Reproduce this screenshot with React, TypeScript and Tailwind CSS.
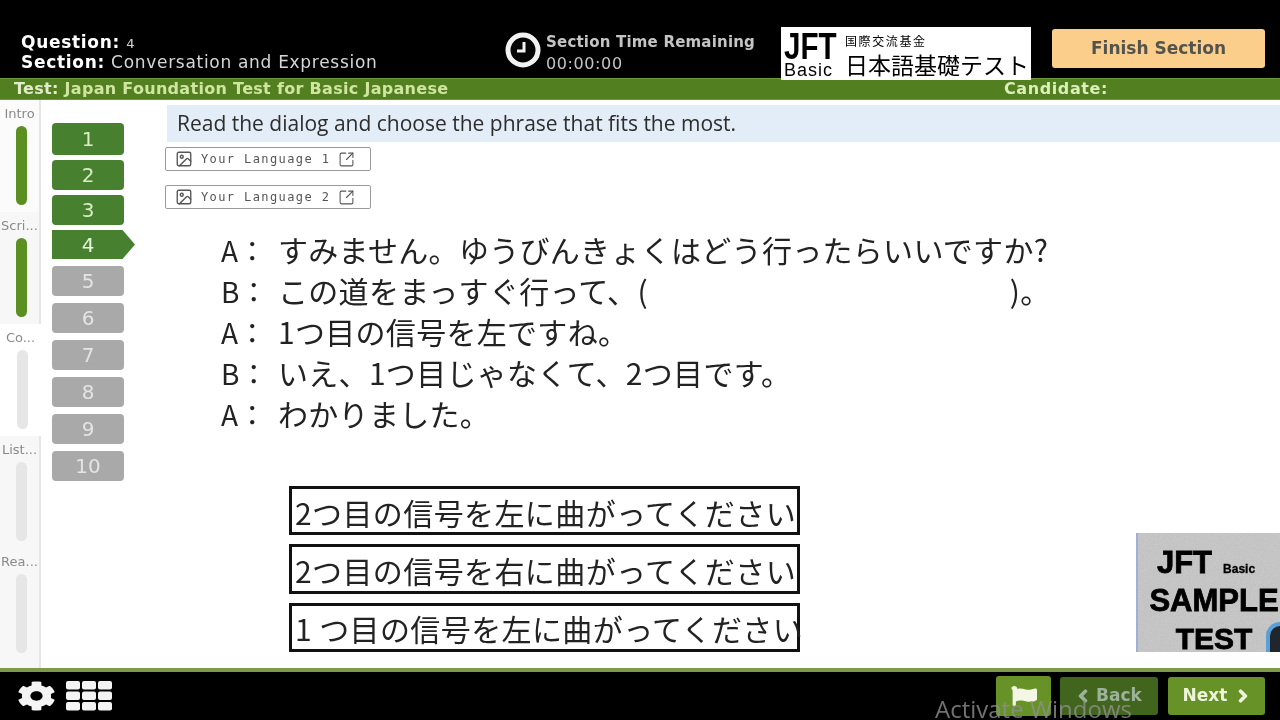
import { FaChevronLeft, FaChevronRight, FaCog, FaFlag } from 'react-icons/fa';
import { Image, SquareArrowOutUpRight } from 'lucide-react';

const JP = { fontFamily: '"Noto Sans CJK JP", "Noto Sans", sans-serif' };
const UI = { fontFamily: '"DejaVu Sans", sans-serif' };

const SECTIONS = [
  { label: 'Intro', done: true, shaded: false },
  { label: 'Scri...', done: true, shaded: true },
  { label: 'Co...', done: false, shaded: false, active: true },
  { label: 'List...', done: false, shaded: true },
  { label: 'Rea...', done: false, shaded: true },
];

const NUMBERS = [1, 2, 3, 4, 5, 6, 7, 8, 9, 10];

const CHOICES = [
  '2つ目の信号を左に曲がってください',
  '2つ目の信号を右に曲がってください',
  '1 つ目の信号を左に曲がってください',
];

function ClockIcon() {
  return (
    <svg width="36" height="36" viewBox="0 0 36 36" fill="none">
      <circle cx="18" cy="18" r="15" stroke="#f2f2f2" strokeWidth="5" fill="#050505" />
      <path d="M19 10v9h-7" stroke="#f2f2f2" strokeWidth="3" />
    </svg>
  );
}

function GridIcon() {
  const cols = [0, 16, 32];
  const rows = [0, 10.5, 21];
  return (
    <svg width="46" height="30" viewBox="0 0 46 30" fill="#f4f4f4" className="ml-[10px]">
      {rows.map((y) => cols.map((x) => <rect key={`${x}-${y}`} x={x} y={y} width="14" height="8.5" rx="2" />))}
    </svg>
  );
}

function SectionNav() {
  return (
    <div className="flex w-[41px] shrink-0 flex-col">
      {SECTIONS.map((s, i) => (
        <div
          key={s.label}
          className={`flex flex-col items-center pt-[5px] ${i === SECTIONS.length - 1 ? 'flex-1' : 'h-[112px]'} ${
            s.active ? 'bg-white' : `border-r-2 border-[#e6e6e6] ${s.shaded ? 'bg-[#f7f7f7]' : 'bg-[#fbfbfb]'}`
          }`}
        >
          <span className="h-[21px] text-[13px] leading-[18px] text-[#8a8a8a]" style={UI}>
            {s.label}
          </span>
          <div className={`ml-[3px] h-[79px] w-[11px] rounded-full ${s.done ? 'bg-[#5b8f22]' : 'bg-[#e6e6e6]'}`} />
        </div>
      ))}
    </div>
  );
}

function QuestionNav() {
  return (
    <div className="ml-[11px] flex w-[83px] shrink-0 flex-col pt-[18px]">
      {NUMBERS.map((n) => (
        <div
          key={n}
          className={`flex items-center justify-center text-[20px] ${n === 1 ? 'h-[32px]' : n === 4 ? 'h-[29px]' : 'h-[30px]'} ${
            n > 4 ? 'mt-[7px]' : 'mt-[5px]'
          } ${
            n === 4
              ? 'w-[83px] bg-[#47812f] pr-[11px] text-[#e8f3dc] [clip-path:polygon(0_0,85%_0,100%_50%,85%_100%,0_100%)]'
              : `w-[72px] rounded-[4px] ${n < 4 ? 'bg-[#47812f] text-[#d9ecc6]' : 'bg-[#a9a9a9] text-[#e4e4e4]'}`
          }`}
          style={UI}
        >
          {n}
        </div>
      ))}
    </div>
  );
}

function LanguageButton({ n }: { n: number }) {
  return (
    <div className="flex h-[24px] w-[206px] items-center gap-[8px] rounded-[2px] border border-[#9a9a9a] pl-[9px] text-[#555]">
      <Image size={18} strokeWidth={1.8} />
      <span className="text-[12px] tracking-[1.4px]" style={{ fontFamily: '"DejaVu Sans Mono", monospace' }}>
        Your Language {n}
      </span>
      <SquareArrowOutUpRight size={17} strokeWidth={1.5} />
    </div>
  );
}

function DialogLine({ who, children }: { who: string; children: React.ReactNode }) {
  return (
    <div className="flex h-[41px] items-center text-[30px] tracking-[0.3px] whitespace-nowrap text-[#222]" style={JP}>
      <span className="w-[57px] text-[28px]">{who}：</span>
      <span>{children}</span>
    </div>
  );
}

function SampleBadge() {
  return (
    <div
      className="relative ml-auto flex h-[119px] w-[144px] shrink-0 flex-col items-center overflow-hidden border-l-2 border-[#9fb0d8] bg-[#c6c6c6] pt-[11px] pl-[10px] font-bold text-black"
      style={{ fontFamily: '"Liberation Sans", sans-serif' }}
    >
      <svg className="absolute inset-0 h-full w-full opacity-25">
        <filter id="grain">
          <feTurbulence type="fractalNoise" baseFrequency="0.8" numOctaves="2" />
          <feColorMatrix type="saturate" values="0" />
        </filter>
        <rect width="100%" height="100%" filter="url(#grain)" />
      </svg>
      <div className="absolute -right-[14px] -bottom-[30px] h-[60px] w-[28px] rounded-full border-[4px] border-[#5a9fd8] bg-[#20262e]" />
      <div className="relative flex h-[38px] items-baseline gap-[11px] pr-[16px] [-webkit-text-stroke:0.8px_black]">
        <span className="text-[31px] leading-[38px]">JFT</span>
        <span className="text-[12px] [-webkit-text-stroke:0.3px_black]">Basic</span>
      </div>
      <span className="relative h-[38px] text-[31px] leading-[38px] whitespace-nowrap [-webkit-text-stroke:0.8px_black]">SAMPLE</span>
      <span className="relative mt-[6px] text-[30px] leading-[26px] [-webkit-text-stroke:0.8px_black]">TEST</span>
    </div>
  );
}

export default function App() {
  return (
    <div className="relative flex h-[720px] w-[1280px] flex-col overflow-hidden bg-white blur-[0.5px]" style={UI}>
      {/* top bar */}
      <header className="flex h-[78px] shrink-0 items-start bg-black pl-[21px]">
        <div className="w-[484px] pt-[33px] text-[17px] leading-[18px] tracking-[0.7px] text-[#d6d6d6]">
          <div>
            <b className="text-white">Question:</b> <span className="text-[13px]">4</span>
          </div>
          <div className="whitespace-nowrap">
            <b className="text-white">Section:</b> Conversation and Expression
          </div>
        </div>
        <div className="mt-[32px]">
          <ClockIcon />
        </div>
        <div className="ml-[5px] w-[235px] pt-[32px] text-[15px] leading-[21px] tracking-[0.2px] text-[#c4c4c4]">
          <div className="font-semibold whitespace-nowrap">Section Time Remaining</div>
          <div className="text-[16px] tracking-[0.6px]">00:00:00</div>
        </div>
        <div className="relative z-10 mt-[27px] flex h-[53px] w-[250px] shrink-0 items-center bg-white pl-[3px] text-black" style={JP}>
          <div className="flex w-[56px] flex-col leading-none" style={{ fontFamily: '"Liberation Sans", sans-serif' }}>
            <span className="origin-left scale-x-[0.8] pt-[3px] text-[37px] leading-[31px] font-bold">JFT</span>
            <span className="text-[18px] leading-[17px] tracking-[1px]">Basic</span>
          </div>
          <div className="ml-[5px] flex flex-col pt-[2px]">
            <span className="text-[12px] leading-[20px] tracking-[1.6px]">国際交流基金</span>
            <span className="text-[23px] leading-[27px] whitespace-nowrap">日本語基礎テスト</span>
          </div>
        </div>
        <button className="mt-[29px] ml-[21px] h-[39px] w-[213px] rounded-[3px] bg-[#fbce8b] text-[17px] font-bold text-[#55544c]">
          Finish Section
        </button>
      </header>

      {/* test bar */}
      <div className="flex h-[22px] shrink-0 items-center border-t border-b border-[#6b9a35] bg-[#527f20] pl-[14px] text-[16px] font-semibold tracking-[0.3px] text-[#cfe5a0]">
        <span className="w-[990px] whitespace-nowrap">
          <b className="text-[#e2eccd]">Test:</b> Japan Foundation Test for Basic Japanese
        </span>
        <b className="tracking-[0.6px] text-[#dcefb8]">Candidate:</b>
      </div>

      {/* body */}
      <div className="flex min-h-0 flex-1">
        <SectionNav />
        <QuestionNav />
        <main className="ml-[30px] flex min-w-0 flex-1 flex-col pt-[5px]">
          <div
            className="ml-[2px] flex h-[37px] items-center bg-[#e3edf7] pl-[10px] text-[21px] text-[#2d2d2d]"
            style={{ fontFamily: '"Open Sans", sans-serif' }}
          >
            Read the dialog and choose the phrase that fits the most.
          </div>
          <div className="mt-[5px] flex flex-col gap-[14px]">
            <LanguageButton n={1} />
            <LanguageButton n={2} />
          </div>
          <div className="mt-[20px] ml-[56px] flex flex-col">
            <DialogLine who="A">すみません。ゆうびんきょくはどう行ったらいいですか?</DialogLine>
            <DialogLine who="B">
              この道をまっすぐ行って、(<span className="inline-block w-[362px]" />)。
            </DialogLine>
            <DialogLine who="A">1つ目の信号を左ですね。</DialogLine>
            <DialogLine who="B">いえ、1つ目じゃなくて、2つ目です。</DialogLine>
            <DialogLine who="A">わかりました。</DialogLine>
          </div>
          <div className="mt-[52px] flex items-end">
            <div className="ml-[124px] flex w-[511px] flex-col gap-[9px]">
              {CHOICES.map((c) => (
                <div
                  key={c}
                  className="flex h-[49.33px] items-center border-[3px] border-[#111] pt-[3px] pl-[3px] text-[30px] tracking-[0.4px] whitespace-nowrap text-[#222]"
                  style={JP}
                >
                  {c}
                </div>
              ))}
            </div>
            <SampleBadge />
          </div>
        </main>
      </div>

      {/* footer */}
      <footer className="flex h-[52px] shrink-0 items-center border-t-[4px] border-[#7c9a4a] bg-black pl-[17px] text-white">
        <FaCog preserveAspectRatio="none" className="h-[30px] w-[39px] text-[#f4f4f4]" />
        <GridIcon />
        <button className="ml-[884px] flex h-[40px] w-[55px] items-center justify-center rounded-[3px] bg-[#679227] text-[#f3f6e4]">
          <FaFlag preserveAspectRatio="none" className="h-[20px] w-[26px]" />
        </button>
        <button className="ml-[9px] flex h-[38px] w-[98px] items-center justify-center gap-[6px] rounded-[3px] bg-[#41651d] text-[17px] font-bold text-[#9db29a]">
          <FaChevronLeft size={14} stroke="currentColor" strokeWidth={50} /> Back
        </button>
        <button className="ml-[10px] flex h-[38px] w-[97px] items-center justify-center gap-[9px] rounded-[3px] bg-[#679227] text-[17px] font-bold text-[#eef3dc]">
          Next <FaChevronRight size={14} stroke="currentColor" strokeWidth={50} />
        </button>
      </footer>

      <span
        className="pointer-events-none absolute top-[691px] left-[935px] text-[24px] text-[#8f8f8f]/80"
        style={{ fontFamily: '"Open Sans", sans-serif' }}
      >
        Activate Windows
      </span>
    </div>
  );
}
